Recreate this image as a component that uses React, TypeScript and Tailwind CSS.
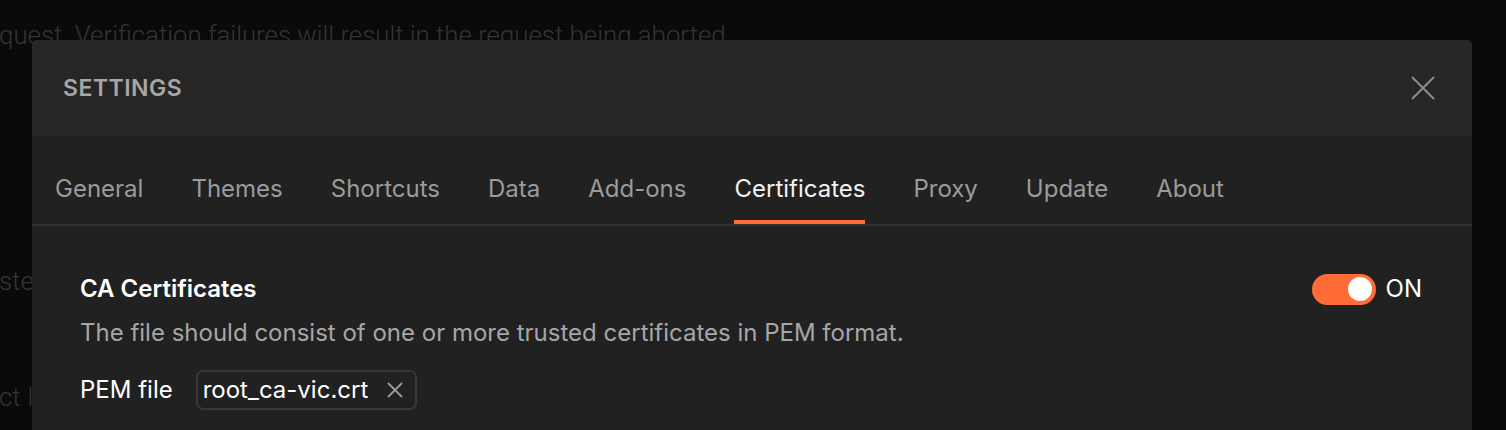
import React from "react";

const tabs = ["General", "Themes", "Shortcuts", "Data", "Add-ons", "Certificates", "Proxy", "Update", "About"];

export default function App() {
  return (
    <div className="relative w-full h-[430px] overflow-hidden bg-[#0a0a0a]" style={{ fontFamily: "Inter, 'Noto Sans', sans-serif" }}>
      {/* background page */}
      <div className="flex flex-col text-[#343434] text-[25.8px] font-light whitespace-nowrap" style={{ fontFamily: "Roboto, sans-serif" }}>
        <div className="mt-[20px] ml-[-1px] leading-[30px]">quest. Verification failures will result in the request being aborted.</div>
        <div className="mt-[216px] ml-[-1px] leading-[30px]">ste</div>
        <div className="mt-[86px] ml-[-1px] leading-[30px]">ct I</div>
      </div>

      {/* modal */}
      <div className="absolute left-[32px] top-[40px] w-[1440px] h-[400px] rounded-t-[5px] bg-[#212121] overflow-hidden">
        <div className="h-[96px] bg-[#262626] flex items-center justify-between pl-[31px] pr-[37px]">
          <span className="text-[23px] font-semibold text-[#a6a6a6] tracking-[0.5px]">SETTINGS</span>
          <svg width="24" height="24" viewBox="0 0 24 24" className="text-[#8c8c8c]">
            <path d="M1 1 L23 23 M23 1 L1 23" stroke="currentColor" strokeWidth="2" fill="none" />
          </svg>
        </div>

        <div className="h-[90px] border-b-2 border-[#2e2e2e] flex pl-[23px] gap-[48px]">
          {tabs.map((t) => {
            const active = t === "Certificates";
            return (
              <div key={t} className="relative h-full flex items-center pt-[17px]">
                <span className={`text-[24px] ${active ? "text-[#f2f2f2]" : "text-[#9b9b9b]"}`}>{t}</span>
                {active && <div className="absolute left-0 right-0 bottom-0 h-[4px] bg-[#ff6c37]" />}
              </div>
            );
          })}
        </div>

        <div className="pl-[48px] pr-[50px] pt-[48px]">
          <div className="flex items-center justify-between h-[30px]">
            <span className="text-[24px] font-semibold text-white">CA Certificates</span>
            <div className="flex items-center gap-[10px]">
              <div className="w-[64px] h-[31px] rounded-full bg-[#ff6c37] flex items-center justify-end pr-[4px]">
                <div className="w-[24px] h-[24px] rounded-full bg-white" />
              </div>
              <span className="text-[24px] text-white">ON</span>
            </div>
          </div>
          <div className="mt-[14px] text-[24px] text-[#a6a6a6] leading-[30px]">The file should consist of one or more trusted certificates in PEM format.</div>
          <div className="mt-[22px] flex items-center gap-[23px]">
            <span className="text-[24px] text-white">PEM file</span>
            <div className="h-[40px] flex items-center gap-[19px] pl-[5px] pr-[12px] rounded-[7px] border-2 border-[#383838]">
              <span className="text-[24px] text-white">root_ca-vic.crt</span>
              <svg width="16" height="16" viewBox="0 0 16 16" className="text-[#9a9a9a]">
                <path d="M1 1 L15 15 M15 1 L1 15" stroke="currentColor" strokeWidth="1.8" fill="none" />
              </svg>
            </div>
          </div>
        </div>
      </div>
    </div>
  );
}
